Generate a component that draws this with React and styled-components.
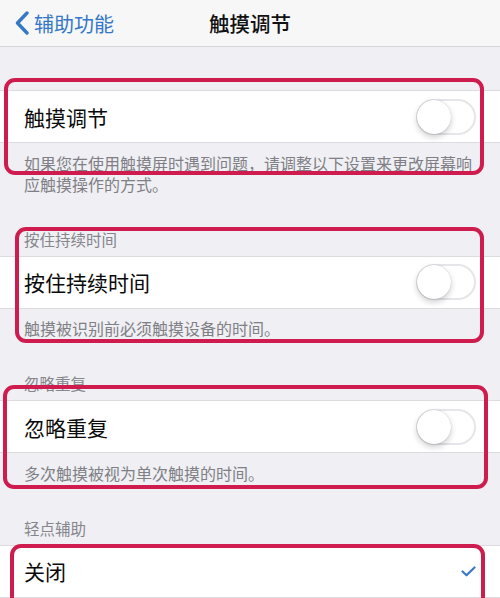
import styled, { createGlobalStyle } from "styled-components";

const Global = createGlobalStyle`
    html, body {
        margin: 0;
        padding: 0;
        background: #efeff4;
    }
    body {
        font-family: "Noto Sans CJK SC", "Noto Sans", sans-serif;
    }
`

const Screen = styled.div`
    position: relative;
    width: 500px;
    height: 598px;
    overflow: hidden;
    background: #efeff4;
`

const NavBar = styled.header`
    height: 46px;
    display: grid;
    grid-template-columns: 1fr auto 1fr;
    align-items: center;
    background: #f7f7f8;
    border-bottom: 1px solid #d6d6da;
`

const Back = styled.a`
    display: flex;
    align-items: center;
    gap: 4px;
    padding-left: 14px;
    color: #3478c6;
    font-size: 20px;
    text-decoration: none;
    svg {
        display: block;
    }
`

const Title = styled.h1`
    margin: 0;
    font-size: 20.5px;
    font-weight: 500;
    color: #111;
`

const Section = styled.section`
    display: flex;
    flex-direction: column;
`

const Header = styled.div`
    padding: ${p => p.$first ? "43px" : "34px"} 24px 7px;
    ${p => p.$first && "height: 0; padding-bottom: 0;"}
    font-size: 15.5px;
    line-height: 20px;
    color: #85858b;
`

const Row = styled.div`
    box-sizing: border-box;
    height: 53px;
    display: flex;
    align-items: center;
    justify-content: space-between;
    padding: 0 24px 0 24px;
    background: #fff;
    border-top: 1px solid #dcdce0;
    border-bottom: 1px solid #dcdce0;
`

const Label = styled.span`
    font-size: 21px;
    color: #0a0a0a;
`

const Footer = styled.p`
    margin: 0;
    padding: 9.5px 24px 0 24px;
    font-size: 16px;
    line-height: 21px;
    color: #7f7f85;
`

const Switch = styled.span`
    position: relative;
    box-sizing: border-box;
    width: 60px;
    height: 36px;
    border-radius: 18px;
    border: 2px solid #e6e6ea;
    background: #fff;
    &::after {
        content: "";
        position: absolute;
        left: -1px;
        top: -1px;
        width: 34px;
        height: 34px;
        border-radius: 50%;
        background: #fff;
        box-shadow: 0 3px 6px rgba(0, 0, 0, 0.2), 0 0 1px rgba(0, 0, 0, 0.25);
    }
`

const Highlight = styled.div`
    position: absolute;
    box-sizing: border-box;
    border: 4px solid #cf1c4e;
    border-radius: 11px;
    pointer-events: none;
`

const Chevron = () => (
    <svg width="16" height="24" viewBox="0 0 16 24">
        <path d="M13 2 L3.5 12 L13 22" fill="none" stroke="#3478c6" strokeWidth="3.4" strokeLinecap="round" strokeLinejoin="round" />
    </svg>
)

const Check = () => (
    <svg width="15" height="11" viewBox="0 0 15 11">
        <path d="M1.5 5.5 L5.5 9.3 L13.5 1.5" fill="none" stroke="#3a78c9" strokeWidth="2.2" strokeLinecap="round" strokeLinejoin="round" />
    </svg>
)

const SECTIONS = [
    { header: "", label: "触摸调节", footer: "如果您在使用触摸屏时遇到问题，请调整以下设置来更改屏幕响应触摸操作的方式。" },
    { header: "按住持续时间", label: "按住持续时间", footer: "触摸被识别前必须触摸设备的时间。" },
    { header: "忽略重复", label: "忽略重复", footer: "多次触摸被视为单次触摸的时间。" },
]

// annotation boxes drawn over the screenshot
const MARKS = [
    { left: 4, top: 78, width: 480, height: 97 },
    { left: 15, top: 227, width: 469, height: 116 },
    { left: 3, top: 385, width: 485, height: 104 },
    { left: 10, top: 544, width: 475, height: 80 },
]

const App = () => {
    return (
        <Screen>
            <Global />
            <NavBar>
                <Back href="#"><Chevron />辅助功能</Back>
                <Title>触摸调节</Title>
                <span />
            </NavBar>
            {SECTIONS.map((s, i) => (
                <Section key={s.label}>
                    <Header $first={i === 0}>{s.header}</Header>
                    <Row>
                        <Label>{s.label}</Label>
                        <Switch />
                    </Row>
                    <Footer>{s.footer}</Footer>
                </Section>
            ))}
            <Section>
                <Header>轻点辅助</Header>
                <Row>
                    <Label>关闭</Label>
                    <Check />
                </Row>
            </Section>
            {MARKS.map((m, i) => (
                <Highlight key={i} style={m} />
            ))}
        </Screen>
    )
}

export default App;
